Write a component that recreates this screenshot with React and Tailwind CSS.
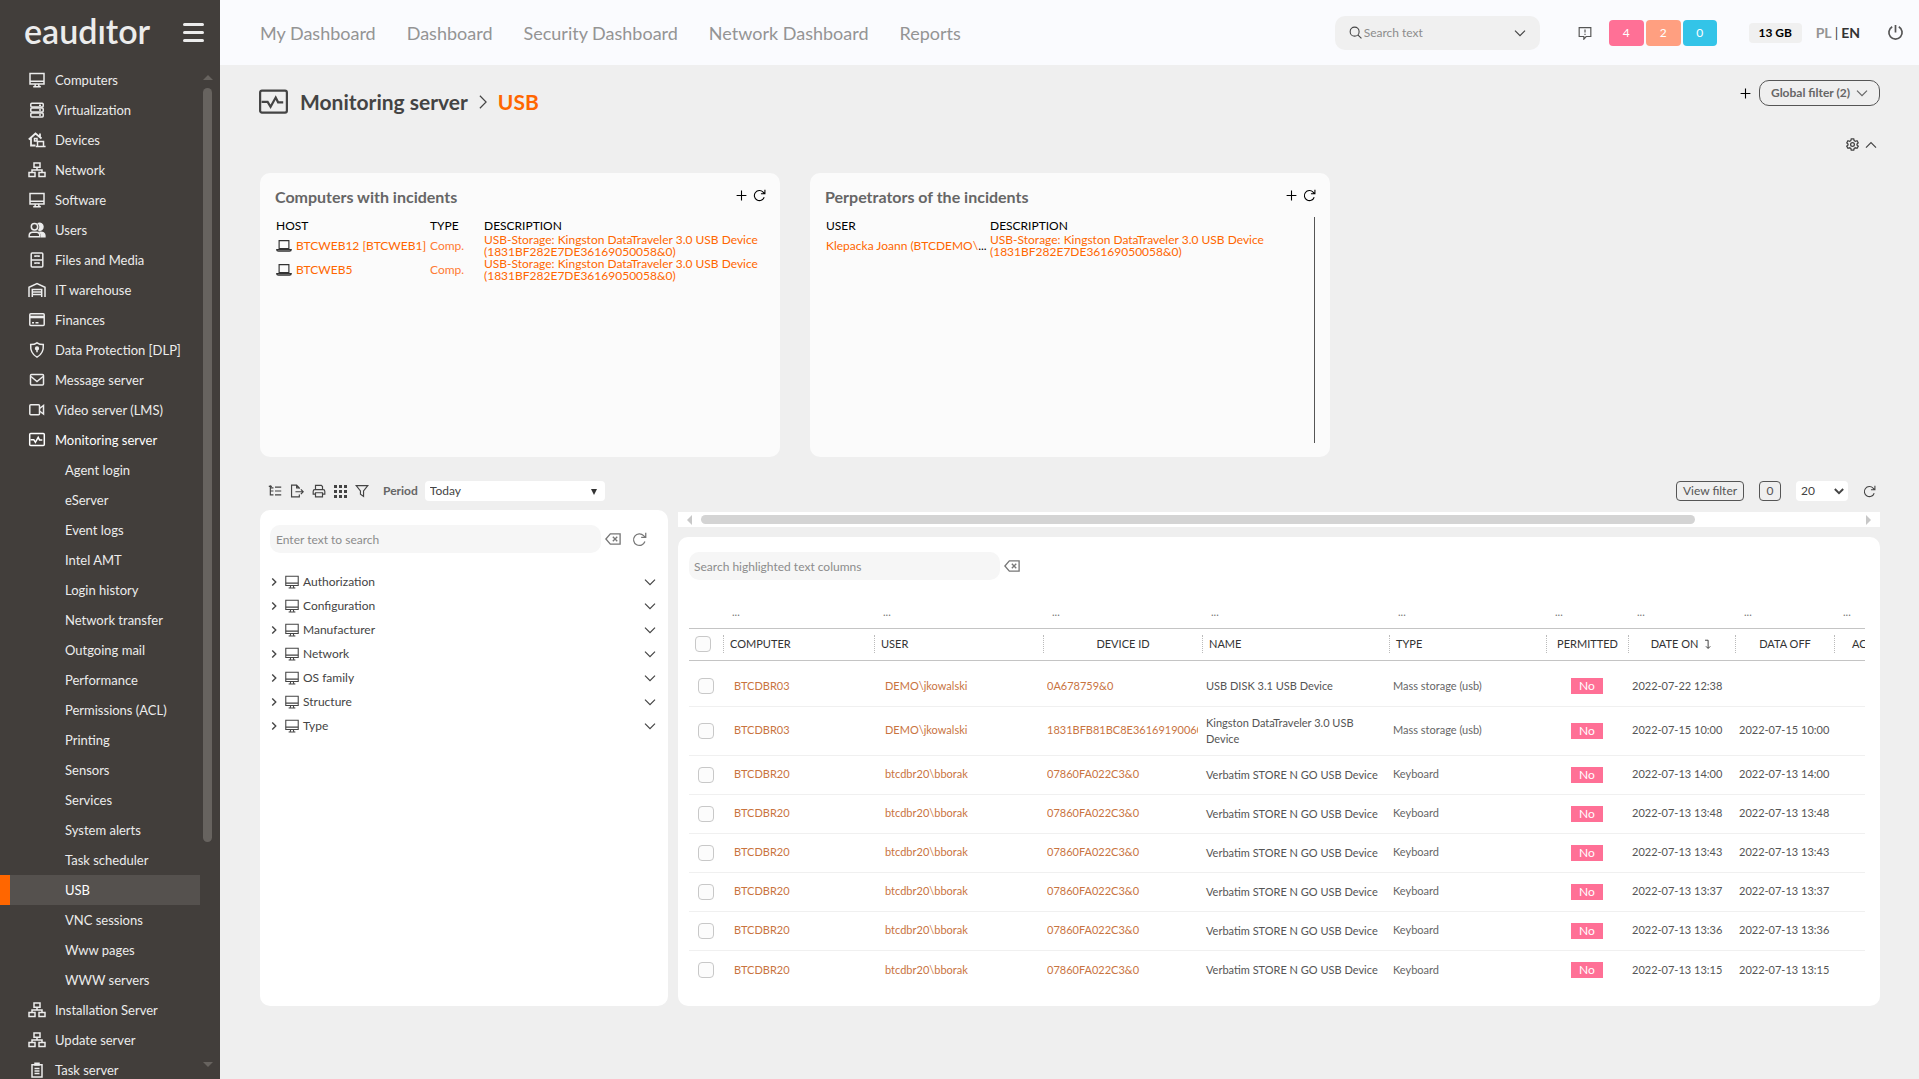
import React, { useState } from 'react';

const icons = {
  desktop: (
    <>
      <path d="M2 2.5h14v10.5H2z" />
      <path d="M2 10.3h14M7.5 13l-.6 2.6M10.5 13l.6 2.6M5.2 15.7h7.6" />
    </>
  ),
  server: (
    <>
      <rect x="2.8" y="2.2" width="12.4" height="3.9" rx="1" />
      <rect x="2.8" y="7.1" width="12.4" height="3.9" rx="1" />
      <rect x="2.8" y="12" width="12.4" height="3.9" rx="1" />
      <path d="M11 4.2h2M11 9h2M11 14h2" />
    </>
  ),
  devices: (
    <>
      <path d="M.8 8.5L7.5 2.5 13.5 7.5M3 7v7.5h4.5M12 2.5v3.5" strokeWidth="1.8" />
      <path d="M6.5 7.5h2.5v2.5H6.5z" />
      <path d="M9.5 15v-4.5h6V15M7.8 15.5h9.8" />
    </>
  ),
  network: (
    <>
      <path d="M6 2h6v4.2H6zM1 11.5h6v4H1zM11 11.5h6v4h-6z" />
      <path d="M9 6.2v2.6M4 11.5V8.9h10v2.6" />
    </>
  ),
  users: (
    <>
      <circle cx="6.5" cy="5.8" r="3.2" />
      <path d="M1.2 15.8v-1.3c0-2 1.6-3.3 3.5-3.3h3.8c1.9 0 3.3 1.3 3.3 3.3v1.3z" />
      <path d="M10.5 2.5c2-.8 4.5.6 4.5 3.2s-2.2 4-4 3.3c1.5-1.8 1.4-4.8-.5-6.5zM13.5 15.8c.1-2.4-.3-3.6-1.5-4.6 2.8-.3 4.9 1 4.9 3.4v1.2z" fill="currentColor" />
    </>
  ),
  files: (
    <>
      <rect x="3.2" y="2" width="11.6" height="14" rx="1" />
      <path d="M3.2 9h11.6M7 6V5h4v1M7 13v-1h4v1" />
    </>
  ),
  warehouse: (
    <>
      <path d="M1 16V6.2L9 2.6l8 3.6V16M4.3 16V8.5h9.4V16" />
      <path d="M4.3 11h9.4M4.3 13.5h9.4" />
    </>
  ),
  card: (
    <>
      <rect x="1.8" y="2.8" width="14.4" height="11.8" rx="1" />
      <path d="M2 6h14" strokeWidth="2.6" />
      <path d="M4 11.8h2M7.5 11.8h3" />
    </>
  ),
  shield: (
    <>
      <path d="M9 1.8c2 1.5 4 1.8 6.3 1.8.4 5.5-1.5 10-6.3 12.5C4.2 13.6 2.3 9.1 2.7 3.6 5 3.6 7 3.3 9 1.8z" />
      <circle cx="9" cy="7.4" r="1.4" fill="currentColor" />
      <path d="M9 8v3.2" />
    </>
  ),
  mail: (
    <>
      <rect x="2.5" y="3.5" width="13" height="10.5" rx="1" />
      <path d="M3 5.5l6 5 6-5" />
    </>
  ),
  video: (
    <>
      <rect x="1.8" y="3.7" width="9.7" height="10" rx="1" />
      <path d="M11.5 7.5L15.5 4.5v8.5l-4-3" />
    </>
  ),
  monitoring: (
    <>
      <rect x="1.7" y="2.5" width="14.6" height="12" rx="1" />
      <path d="M2.5 8.7h3.3l1.6 2.6 2.8-5 1.3 2.6h2.8" />
    </>
  ),
  clipboard: (
    <>
      <path d="M4 3.8h10V16H4z" />
      <path d="M7 4V2.2h4V4zM6.5 7.5h5M6.5 10h5M6.5 12.5h5" />
    </>
  ),
  laptop: <path d="M3.5 3h11v9h-11zM.8 13h16.4c0 1.3-.8 1.8-2 1.8H2.8c-1.2 0-2-.5-2-1.8z" />,
  plus: <path d="M9 1v16M1 9h16" />,
  reload: <path d="M15.5 11.5a7 7 0 1 1-1.5-7.2l2 2M16.5 1v5.5H11" />,
  down: <path d="M1.5 5.5L9 13l7.500-7.500" />,
  up: <path d="M1.5 13L9 5.5l7.5 7.5" />,
  right: <path d="M5 1L13 9l-8 8" />,
  search: (
    <>
      <circle cx="7.8" cy="7.8" r="6.2" />
      <path d="M12.2 12.2l5 5" />
    </>
  ),
  comment: <path d="M1.5 2h15v11.5h-6L7.5 17v-3.5h-6zM9 4.5v4M9 10v1.5" />,
  power: <path d="M9 1v8M5.5 3a7 7 0 1 0 7 0" />,
  gear: (
    <>
      <path d="M7.3 1.2h3.4l.6 2.4 1.6.9 2.4-.7 1.6 2.9-1.7 1.7v1.3l1.7 1.7-1.6 2.9-2.4-.7-1.6.9-.6 2.4H7.3l-.6-2.4-1.6-.9-2.4.7-1.6-2.9 1.7-1.7V8.4L1.1 6.7l1.6-2.9 2.4.7 1.6-.9z" />
      <circle cx="9" cy="9" r="2.6" />
    </>
  ),
  tree: <path d="M3 1.5v12.5h4M3 5h4M1 3h4M9 4h8M9 9h8M9 14h8M3 9h4" />,
  export: <path d="M12 6V5l-3.5-3.5H2v15h10v-3M8.5 1.5V5H12M7 10h10M14 7l3 3-3 3" />,
  print: <path d="M4.5 7V1.8h7.5l1.5 1.5V7M4 13H1.5V9.5C1.5 8 2.3 7.2 3.7 7.2h10.6c1.4 0 2.2.8 2.2 2.3V13H14M4.5 11.2h9v5.3h-9z" />,
  filter: <path d="M1.5 2h15L11 9v7l-4-3V9z" />,
  backspace: <path d="M6 3.2h11v11.6H6L1 9zM8.8 6.5l5 5M13.8 6.5l-5 5" />,
  sort: <path d="M5 2h5v13M6.5 12l3.5 3.5L13.5 12" />,
};

const Icon = ({ name, size = 18, stroke = 1.5, className = '' }) => (
  <svg
    width={size}
    height={size}
    viewBox="0 0 18 18"
    fill="none"
    stroke="currentColor"
    strokeWidth={stroke}
    className={`shrink-0 ${className}`}
    aria-hidden="true"
  >
    {icons[name]}
  </svg>
);

const GridIcon = () => (
  <svg width="13" height="13" viewBox="0 0 13 13" fill="currentColor" aria-hidden="true">
    {[0, 5, 10].map((y) => [0, 5, 10].map((x) => <rect key={`${x}-${y}`} x={x} y={y} width="3" height="3" />))}
  </svg>
);

const menu = [
  { label: 'Computers', icon: 'desktop' },
  { label: 'Virtualization', icon: 'server' },
  { label: 'Devices', icon: 'devices' },
  { label: 'Network', icon: 'network' },
  { label: 'Software', icon: 'desktop' },
  { label: 'Users', icon: 'users' },
  { label: 'Files and Media', icon: 'files' },
  { label: 'IT warehouse', icon: 'warehouse' },
  { label: 'Finances', icon: 'card' },
  { label: 'Data Protection [DLP]', icon: 'shield' },
  { label: 'Message server', icon: 'mail' },
  { label: 'Video server (LMS)', icon: 'video' },
  {
    label: 'Monitoring server',
    icon: 'monitoring',
    children: [
      'Agent login', 'eServer', 'Event logs', 'Intel AMT', 'Login history', 'Network transfer',
      'Outgoing mail', 'Performance', 'Permissions (ACL)', 'Printing', 'Sensors', 'Services',
      'System alerts', 'Task scheduler', 'USB', 'VNC sessions', 'Www pages', 'WWW servers',
    ],
  },
  { label: 'Installation Server', icon: 'network' },
  { label: 'Update server', icon: 'network' },
  { label: 'Task server', icon: 'clipboard' },
];

const navLinks = ['My Dashboard', 'Dashboard', 'Security Dashboard', 'Network Dashboard', 'Reports'];

const treeItems = ['Authorization', 'Configuration', 'Manufacturer', 'Network', 'OS family', 'Structure', 'Type'];

const usbDescription = 'USB-Storage: Kingston DataTraveler 3.0 USB Device (1831BF282E7DE36169050058&0)';

const verbatim = {
  computer: 'BTCDBR20',
  user: 'btcdbr20\\bborak',
  device: '07860FA022C3&0',
  name: 'Verbatim STORE N GO USB Device',
  type: 'Keyboard',
};

const rows = [
  { computer: 'BTCDBR03', user: 'DEMO\\jkowalski', device: '0A678759&0', name: 'USB DISK 3.1 USB Device', type: 'Mass storage (usb)', on: '2022-07-22 12:38', off: '' },
  { computer: 'BTCDBR03', user: 'DEMO\\jkowalski', device: '1831BFB81BC8E36169190060', name: 'Kingston DataTraveler 3.0 USB Device', type: 'Mass storage (usb)', on: '2022-07-15 10:00', off: '2022-07-15 10:00' },
  { ...verbatim, on: '2022-07-13 14:00', off: '2022-07-13 14:00' },
  { ...verbatim, on: '2022-07-13 13:48', off: '2022-07-13 13:48' },
  { ...verbatim, on: '2022-07-13 13:43', off: '2022-07-13 13:43' },
  { ...verbatim, on: '2022-07-13 13:37', off: '2022-07-13 13:37' },
  { ...verbatim, on: '2022-07-13 13:36', off: '2022-07-13 13:36' },
  { ...verbatim, on: '2022-07-13 13:15', off: '2022-07-13 13:15' },
];

const columns = [
  { label: 'COMPUTER', align: 'justify-start pl-[6px]', width: 'w-[151px]' },
  { label: 'USER', align: 'justify-start pl-[6px]', width: 'w-[169px]' },
  { label: 'DEVICE ID', align: 'justify-center', width: 'w-[159px]' },
  { label: 'NAME', align: 'justify-start pl-[6px]', width: 'w-[187px]' },
  { label: 'TYPE', align: 'justify-start pl-[6px]', width: 'w-[157px]' },
  { label: 'PERMITTED', align: 'justify-center', width: 'w-[82px]' },
  { label: 'DATE ON', align: 'justify-center', width: 'w-[107px]', sorted: true },
  { label: 'DATA OFF', align: 'justify-center', width: 'w-[99px]' },
  { label: 'AC', align: 'justify-start pl-[17px]', width: 'w-[31px]' },
];

const Sidebar = ({ active, onSelect }) => (
  <aside className="relative flex h-screen w-[220px] shrink-0 flex-col overflow-hidden bg-[#423e3b] text-[#ececec]">
    <div className="flex h-[65px] shrink-0 items-center justify-between pr-4 pl-6">
      <a href="#" aria-label="eauditor" className="pb-1 text-[34px] leading-8 font-semibold">eaudıtor</a>
      <button aria-label="Toggle menu" className="flex w-[21px] flex-col gap-[5px]">
        <span className="h-[3px] rounded-sm bg-[#ececec]" />
        <span className="h-[3px] rounded-sm bg-[#ececec]" />
        <span className="h-[3px] rounded-sm bg-[#ececec]" />
      </button>
    </div>
    <nav className="text-[13px] leading-4">
      {menu.map((item) => (
        <div key={item.label}>
          <a href="#" className={`flex h-[30px] items-center gap-[9px] pl-7 ${item.children ? 'text-white' : ''}`}>
            <Icon name={item.icon} />
            {item.label}
          </a>
          {item.children?.map((child) => (
            <a
              key={child}
              href="#"
              onClick={() => onSelect(child)}
              className={`mr-5 flex h-[30px] items-center ${child === active ? 'border-l-[10px] border-[#ff6600] bg-[#55514e] pl-[55px] text-white' : 'pl-[65px]'}`}
            >
              {child}
            </a>
          ))}
        </div>
      ))}
    </nav>
    {/* scrollbar lies over the menu */}
    <div className="absolute top-[75px] right-2 bottom-3 flex w-[9px] flex-col items-center gap-2">
      <span className="border-x-[5px] border-b-[5px] border-x-transparent border-b-[#67635f]" />
      <span className="h-[76%] w-[9px] rounded-full bg-[#67635f]" />
      <span className="mt-auto border-x-[5px] border-t-[5px] border-x-transparent border-t-[#67635f]" />
    </div>
  </aside>
);

const Header = () => (
  <header className="flex h-[65px] items-center bg-[#fafbfe] pr-[15px] pl-10">
    <nav className="flex gap-[31px] text-lg text-[#949494]">
      {navLinks.map((link) => (
        <a key={link} href="#">{link}</a>
      ))}
    </nav>
    <label className="ml-auto flex h-[34px] w-[205px] items-center gap-[2px] rounded-[10px] bg-[#f0f0f0] pr-[14px] pl-[14px] text-[#444]">
      <Icon name="search" size={13} />
      <input type="text" placeholder="Search text" aria-label="Search text" className="min-w-0 flex-1 bg-transparent text-xs outline-none placeholder:text-[#8c8c8c]" />
      <Icon name="down" size={12} stroke={1.8} />
    </label>
    <button aria-label="Messages" className="ml-[38px] text-[#555]">
      <Icon name="comment" size={14} />
    </button>
    <div className="ml-[17px] flex gap-[2px] text-xs text-white">
      <button className="h-[26px] w-[35px] rounded-[4px] bg-[#ff7096]">4</button>
      <button className="h-[26px] w-[35px] rounded-[4px] bg-[#ff9f80]">2</button>
      <button className="h-[26px] w-[34px] rounded-[4px] bg-[#33c4e8]">0</button>
    </div>
    <span className="ml-8 flex h-5 w-[53px] items-center justify-center rounded-[4px] bg-[#f0f0f0] text-xs font-bold text-black">13 GB</span>
    <div className="ml-[14px] flex gap-[3px] text-sm font-bold">
      <button className="text-[#949494]">PL</button>
      <span className="font-normal text-[#444]">|</span>
      <button className="text-[#333]">EN</button>
    </div>
    <button aria-label="Log out" className="ml-[27px] text-[#555]">
      <Icon name="power" size={17} stroke={1.8} />
    </button>
  </header>
);

const Widget = ({ title, children }) => (
  <section className="flex h-[284px] w-[520px] flex-col rounded-[10px] bg-[#fbfbfb] px-[15px] pt-3 text-black">
    <div className="flex h-6 items-center">
      <h2 className="text-base font-bold text-[#666]">{title}</h2>
      <div className="-mr-px ml-auto flex items-center gap-[6px] pb-1">
        <button aria-label={`Add to ${title}`}><Icon name="plus" size={11} stroke={1.8} /></button>
        <button aria-label={`Refresh ${title}`}><Icon name="reload" size={13} /></button>
      </div>
    </div>
    {children}
  </section>
);

const ComputersWidget = () => (
  <Widget title="Computers with incidents">
    <table className="mt-[9px] w-full table-fixed text-left text-xs leading-3">
      <thead>
        <tr className="h-4">
          <th className="w-[154px] pl-px font-normal">HOST</th>
          <th className="w-[54px] pl-px font-normal">TYPE</th>
          <th className="pl-px font-normal">DESCRIPTION</th>
        </tr>
      </thead>
      <tbody className="text-[#ff6600]">
        {['BTCWEB12 [BTCWEB1]', 'BTCWEB5'].map((host) => (
          <tr key={host} className="h-6">
            <td className="pl-px">
              <a href="#" className="flex items-center gap-1 whitespace-nowrap">
                <Icon name="laptop" size={16} stroke={1.3} className="text-[#333]" />
                {host}
              </a>
            </td>
            <td className="pl-px text-[#ff7a33]">Comp.</td>
            <td className="pl-px"><a href="#">{usbDescription}</a></td>
          </tr>
        ))}
      </tbody>
    </table>
  </Widget>
);

const PerpetratorsWidget = () => (
  <Widget title="Perpetrators of the incidents">
    <div className="mt-2 h-[226px] border-r border-[#555]">
      <table className="mt-px w-full table-fixed text-left text-xs leading-3">
        <thead>
          <tr className="h-4">
            <th className="w-[164px] pl-px font-normal">USER</th>
            <th className="pl-px font-normal">DESCRIPTION</th>
          </tr>
        </thead>
        <tbody>
          <tr className="h-6">
            <td className="pl-px whitespace-nowrap"><a href="#" className="text-[#ff6600]">Klepacka Joann (BTCDEMO\</a>...</td>
            <td className="pl-px"><a href="#" className="text-[#ff6600]">{usbDescription}</a></td>
          </tr>
        </tbody>
      </table>
    </div>
  </Widget>
);

const Toolbar = () => (
  <div className="mt-6 flex h-5 items-center text-xs text-[#444]">
    <div className="flex items-center gap-2 pl-2">
      <button aria-label="Tree"><Icon name="tree" size={14} /></button>
      <button aria-label="Export"><Icon name="export" size={14} /></button>
      <button aria-label="Print"><Icon name="print" size={14} /></button>
      <button aria-label="Columns"><GridIcon /></button>
      <button aria-label="Filter"><Icon name="filter" size={14} /></button>
    </div>
    <label htmlFor="period" className="ml-[14px] font-bold text-[#666]">Period</label>
    <div className="relative ml-[7px]">
      <select id="period" className="h-5 w-[180px] appearance-none rounded-[4px] bg-white pl-[5px] text-[#444] outline-none">
        <option>Today</option>
      </select>
      <span className="pointer-events-none absolute top-2 right-[8px] border-x-[3px] border-t-[6px] border-x-transparent border-t-[#333]" />
    </div>
    <div className="ml-auto flex items-center">
      <button className="h-5 w-[68px] rounded-[4px] border border-[#555] text-[#555]">View filter</button>
      <button className="ml-[15px] h-5 w-[22px] rounded-[4px] border border-[#555] text-[#555]">0</button>
      <div className="relative ml-[15px]">
        <select aria-label="Rows per page" className="h-5 w-[52px] appearance-none rounded-[4px] bg-white pl-[5px] text-[#444] outline-none">
          <option>20</option>
        </select>
        <Icon name="down" size={10} stroke={3.5} className="pointer-events-none absolute top-[5px] right-[4px]" />
      </div>
      <button aria-label="Refresh" className="mr-1 ml-[15px]"><Icon name="reload" size={13} /></button>
    </div>
  </div>
);

const TreePanel = () => (
  <section className="w-[408px] shrink-0 rounded-[10px] bg-white px-[10px] pt-[15px] text-[#444]">
    <div className="flex items-center">
      <input type="text" aria-label="Enter text to search" placeholder="Enter text to search" className="h-7 w-[331px] rounded-[10px] bg-[#f6f6f6] px-[6px] text-xs outline-none placeholder:text-[#8c8c8c]" />
      <button aria-label="Clear" className="ml-1 text-[#777]"><Icon name="backspace" size={16} /></button>
      <button aria-label="Refresh tree" className="ml-[11px] text-[#777]"><Icon name="reload" size={15} /></button>
    </div>
    <ul className="mt-[17px] text-xs">
      {treeItems.map((item) => (
        <li key={item} className="flex h-6 items-center pr-[2px]">
          <button aria-label={`Expand ${item}`}><Icon name="right" size={8} stroke={3} /></button>
          <Icon name="desktop" size={16} stroke={1.2} className="ml-[6px]" />
          <span className="ml-[3px]">{item}</span>
          <button aria-label={`Options for ${item}`} className="ml-auto"><Icon name="down" size={12} stroke={1.8} /></button>
        </li>
      ))}
    </ul>
  </section>
);

const checkboxClass = 'block h-4 w-4 appearance-none rounded-[4px] border border-[#c8c8c8] bg-[#fcfcfc] checked:bg-[#ff6600]';

const UsbTable = () => (
  <div className="mt-[24px] overflow-hidden">
    <table className="w-full table-fixed text-left text-[11px] text-[#444]">
      <thead>
        <tr className="h-6 text-[#777]">
          <td className="w-[34px]" />
          {columns.map((col) => (
            <td key={col.label} className={`${col.width} pl-[9px] align-top leading-4`}>...</td>
          ))}
        </tr>
        <tr className="h-8 border-y border-[#c4c4c4] text-[#333]">
          <th className="pl-[6px]"><input type="checkbox" aria-label="Select all" className={checkboxClass} /></th>
          {columns.map((col) => (
            <th key={col.label} className="overflow-hidden font-normal">
              <div className={`flex h-[18px] items-center gap-1 border-l border-dotted border-[#bbb] whitespace-nowrap ${col.align}`}>
                {col.label}
                {col.sorted && <Icon name="sort" size={11} />}
              </div>
            </th>
          ))}
        </tr>
      </thead>
      <tbody className="text-[#555]">
        <tr className="h-[7px]"><td colSpan={10} /></tr>
        {rows.map((row) => (
          <tr key={row.on} className="h-[39px] border-b border-[#f0f0f0] last:border-0">
            <td className="pl-[9px]"><input type="checkbox" aria-label={`Select ${row.on}`} className={checkboxClass} /></td>
            <td className="pl-[11px]"><a href="#" className="text-[#c9743f]">{row.computer}</a></td>
            <td className="pl-[11px]"><a href="#" className="text-[#c9743f]">{row.user}</a></td>
            <td className="overflow-hidden pr-1 pl-[4px]">
              <a href="#" className="block overflow-hidden whitespace-nowrap text-[#c9743f]">{row.device}</a>
            </td>
            <td className="py-2 pr-[10px] pl-[4px] leading-4">{row.name}</td>
            <td className="pl-[4px] text-[#666]">{row.type}</td>
            <td><span className="mx-auto block h-4 w-8 bg-[#ff7096] text-center text-xs leading-4 text-white">No</span></td>
            <td className="pl-[4px] whitespace-nowrap">{row.on}</td>
            <td className="pl-[4px] whitespace-nowrap">{row.off}</td>
            <td />
          </tr>
        ))}
      </tbody>
    </table>
  </div>
);

export default function App() {
  const [active, setActive] = useState('USB');

  return (
    <div className="flex min-h-screen bg-[#efefef] font-[Lato,sans-serif]">
      <Sidebar active={active} onSelect={setActive} />
      <div className="min-w-0 flex-1">
        <Header />
        <main className="pt-[15px] pr-[39px] pl-10">
          <div className="flex h-[26px] items-center justify-end gap-2 text-[#444]">
            <h1 className="mr-auto flex items-center pt-[18px] text-[21px] leading-6 font-bold text-[#444]">
              <Icon name="monitoring" size={33} stroke={1.2} className="mr-[10px] -ml-[3px]" />
              Monitoring server
              <Icon name="right" size={14} className="mx-2" />
              <span className="text-[#ff6600]">{active}</span>
            </h1>
            <button aria-label="Add global filter" className="text-black"><Icon name="plus" size={11} stroke={1.8} /></button>
            <button className="flex h-[26px] w-[121px] items-center justify-center gap-[6px] rounded-[10px] border border-[#555] text-xs font-bold text-[#666]">
              Global filter (2)
              <Icon name="down" size={12} stroke={1.8} />
            </button>
          </div>
          <div className="mt-8 flex justify-end gap-[6px] pr-[3px] text-[#444]">
            <button aria-label="Settings"><Icon name="gear" size={13} stroke={1.8} /></button>
            <button aria-label="Collapse"><Icon name="up" size={12} stroke={1.8} /></button>
          </div>
          <div className="mt-[22px] flex gap-[30px]">
            <ComputersWidget />
            <PerpetratorsWidget />
          </div>
          <Toolbar />
          <div className="mt-[9px] flex gap-[10px]">
            <TreePanel />
            <div className="min-w-0 flex-1">
              <div className="mt-[2px] flex h-[15px] items-center bg-white px-[9px]">
                <span className="border-y-[5px] border-r-[5px] border-y-transparent border-r-[#c8c8c8]" />
                <div className="mx-[9px] flex-1">
                  <div className="h-[9px] w-[86%] rounded-full bg-[#d4d4d4]" />
                </div>
                <span className="border-y-[5px] border-l-[5px] border-y-transparent border-l-[#c8c8c8]" />
              </div>
              <section className="mt-[10px] rounded-[10px] bg-white pt-[15px] pr-[15px] pb-[17px] pl-[11px]">
                <div className="flex items-center gap-1">
                  <input type="text" aria-label="Search highlighted text columns" placeholder="Search highlighted text columns" className="h-7 w-[311px] rounded-[10px] bg-[#f6f6f6] px-[5px] text-xs outline-none placeholder:text-[#8c8c8c]" />
                  <button aria-label="Clear" className="text-[#777]"><Icon name="backspace" size={16} /></button>
                </div>
                <UsbTable />
              </section>
            </div>
          </div>
        </main>
      </div>
    </div>
  );
}
